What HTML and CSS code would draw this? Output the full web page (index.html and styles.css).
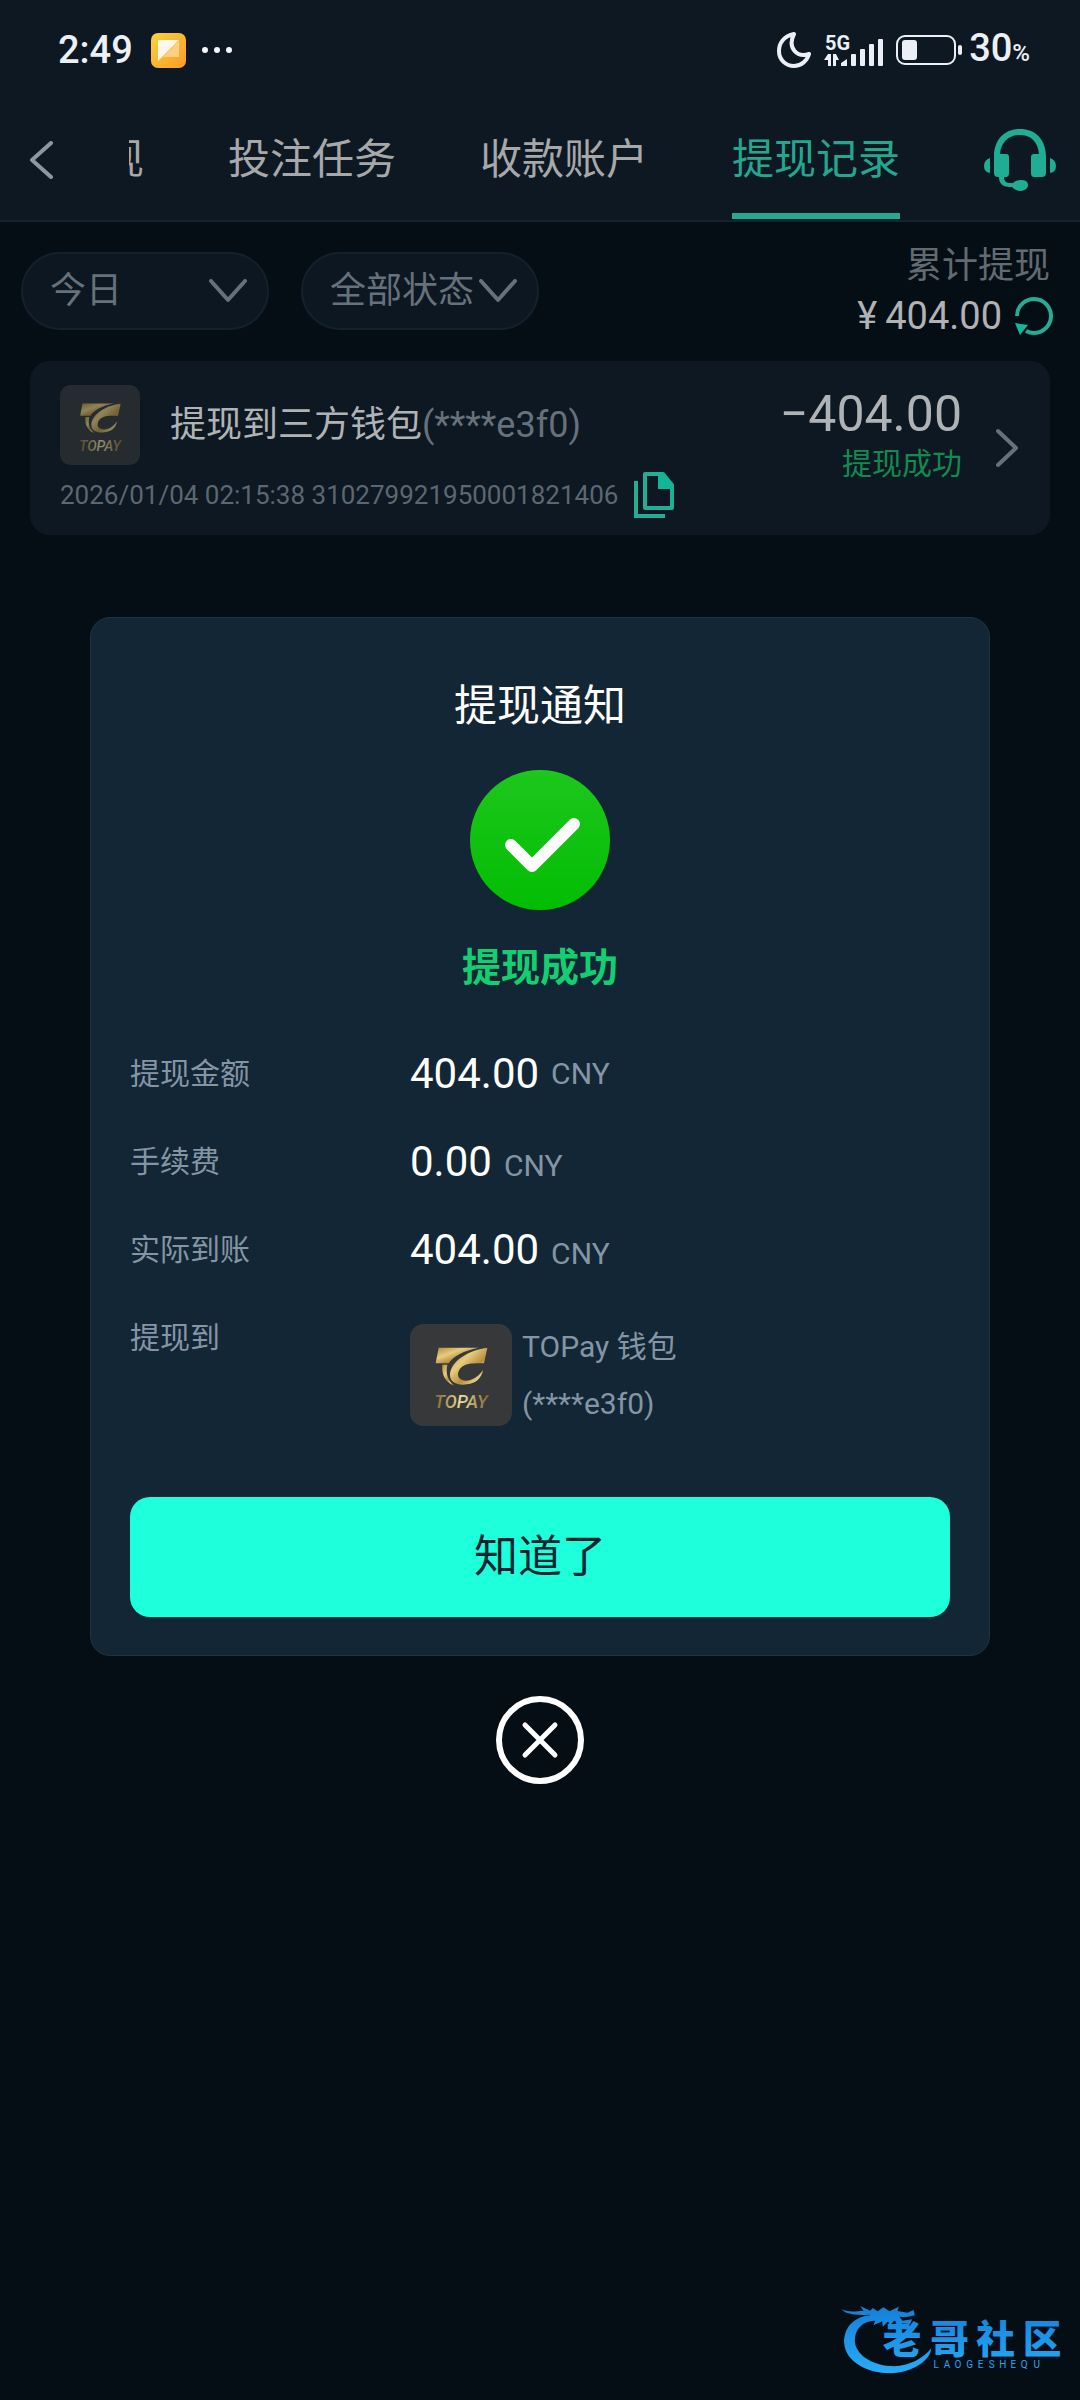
FILE: index.html
```html
<!DOCTYPE html>
<html lang="zh-CN">
<head>
<meta charset="utf-8">
<meta name="viewport" content="width=device-width, initial-scale=1">
<title>提现记录</title>
<link rel="stylesheet" href="styles.css">
</head>
<body>
<svg class="defs" aria-hidden="true">
  <defs>
    <linearGradient id="gold" x1="0" y1="0" x2="1" y2="1">
      <stop offset="0" stop-color="#b28a3c"/>
      <stop offset=".35" stop-color="#e6cd7c"/>
      <stop offset=".6" stop-color="#b98f40"/>
      <stop offset=".8" stop-color="#e6cf86"/>
      <stop offset="1" stop-color="#a37a30"/>
    </linearGradient>
    <linearGradient id="goldText" x1="0" x2="1">
      <stop offset="0" stop-color="#80632c"/>
      <stop offset=".5" stop-color="#f0dfa0"/>
      <stop offset="1" stop-color="#80632c"/>
    </linearGradient>
    <symbol id="topay" viewBox="30 42 306 306">
      <rect x="30" y="42" width="306" height="306" rx="40" fill="#37383a"/>
      <g fill="url(#gold)">
        <path d="M116 113H236C192 122 160 138 146 160H107Z"/>
        <path d="M127 164H142C136 190 144 212 162 226C138 218 124 195 127 164Z"/>
        <path d="M262 114C212 118 150 152 150 196C150 218 174 227 200 223C230 219 244 205 249 180C236 198 220 212 197 212C172 211 168 190 182 174C198 158 225 160 252 160Z"/>
      </g>
      <text x="183" y="293" text-anchor="middle" font-family="Roboto, sans-serif" font-size="54" font-weight="500" font-style="italic" fill="url(#goldText)">TOPAY</text>
    </symbol>
    <symbol id="down" viewBox="0 0 38 24">
      <path d="M2 2L19 21L36 2" fill="none" stroke="currentColor" stroke-width="4" stroke-linecap="round" stroke-linejoin="round"/>
    </symbol>
  </defs>
</svg>

<header class="top">
  <div class="status">
    <span class="clock">2:49</span>
    <svg class="app-badge" viewBox="0 0 35 35" aria-hidden="true">
      <defs><linearGradient id="amber" x1="0" y1="0" x2="1" y2="1"><stop offset="0" stop-color="#fbd33f"/><stop offset="1" stop-color="#fb9a26"/></linearGradient></defs>
      <rect width="35" height="35" rx="7" fill="url(#amber)"/>
      <path d="M28 8V24H12Z" fill="#ffd083"/>
      <path d="M8 7H28L7 28V8Q7 7 8 7Z" fill="#fff8ea"/>
    </svg>
    <svg class="more" viewBox="0 0 31 8" fill="#f3f6fa" aria-hidden="true"><circle cx="3" cy="4" r="3"/><circle cx="15" cy="4" r="3"/><circle cx="27" cy="4" r="3"/></svg>
    <span class="spacer"></span>
    <svg class="moon" viewBox="0 0 34 36" aria-hidden="true"><path d="M17 2C7 4 2 11 2 19C2 28 9 34 17 34C24 34 30 29 32 22C20 26 10 16 17 2Z" fill="none" stroke="#eceff6" stroke-width="4" stroke-linejoin="round"/></svg>
    <svg class="signal" viewBox="0 0 60 32" fill="#eceff6" aria-label="5G">
      <text x="2" y="16" font-family="Roboto, sans-serif" font-size="20" font-weight="700">5G</text>
      <path d="M5 20H8V32H5V26H1ZM10 20H13L16 26H13V32H10Z"/>
      <path d="M18 32V29L24 25V32Z"/>
      <rect x="28" y="20" width="5" height="12" rx="1"/><rect x="37" y="15" width="5" height="17" rx="1"/><rect x="46" y="10" width="5" height="22" rx="1"/><rect x="55" y="5" width="5" height="27" rx="1"/>
    </svg>
    <svg class="battery" viewBox="0 0 66 30" aria-hidden="true"><rect x="1" y="1" width="58" height="28" rx="8" fill="none" stroke="#eceff6" stroke-width="2"/><rect x="6" y="5" width="15" height="20" rx="3" fill="#eceff6"/><rect x="62" y="10" width="4" height="10" rx="2" fill="#eceff6"/></svg>
    <span class="charge">30<small>%</small></span>
  </div>
  <div class="bar">
    <button class="icon-button" aria-label="返回">
      <svg width="25" height="38" viewBox="0 0 25 38"><path d="M22 2L3 19L22 36" fill="none" stroke="#8b97a3" stroke-width="4" stroke-linecap="round" stroke-linejoin="round"/></svg>
    </button>
    <nav class="tabs">
      <a href="#">提现</a>
      <a href="#">投注任务</a>
      <a href="#">收款账户</a>
      <a href="#" class="active" aria-current="page">提现记录</a>
    </nav>
    <button class="icon-button" aria-label="客服">
      <svg width="72" height="62" viewBox="0 0 72 62" fill="#1fae94">
        <path d="M10 28C10 10 21 0 36 0S62 10 62 28V44Q62 48 58 48H50Q47 48 47 44V28Q47 25 50 25H55C54 13 47 6 36 6S17 13 16 25H22Q25 25 25 28V44Q25 48 22 48H20C20 52 22 54 27 54H29Q32 51 37 51Q44 51 44 56T37 62Q31 62 28 58H26C18 58 15 54 15 48H14Q10 48 10 44Z"/>
        <path d="M6 29V44Q0 43 0 37T6 29ZM66 29V44Q72 43 72 37T66 29Z"/>
      </svg>
    </button>
  </div>
</header>

<main class="page">
  <section class="toolbar">
    <div class="filter filter-date">
      <select aria-label="日期"><option>今日</option></select>
      <svg aria-hidden="true"><use href="#down"/></svg>
    </div>
    <div class="filter filter-state">
      <select aria-label="状态"><option>全部状态</option></select>
      <svg aria-hidden="true"><use href="#down"/></svg>
    </div>
    <div class="total">
      <span>累计提现</span>
      <div class="total-value">
        <span class="currency">¥</span><strong>404.00</strong>
        <button class="icon-button" aria-label="刷新">
          <svg width="40" height="40" viewBox="0 0 40 40"><path d="M3 20A17 17 0 1 1 12 35" fill="none" stroke="#26ab94" stroke-width="4"/><path d="M1 27L14 29L6 39Z" fill="#14b898"/></svg>
        </button>
      </div>
    </div>
  </section>

  <article class="record">
    <div class="record-info">
      <div class="record-title">
        <svg class="record-logo" role="img" aria-label="TOPAY"><use href="#topay"/></svg>
        <h2>提现到三方钱包<span>(****e3f0)</span></h2>
      </div>
      <div class="record-meta">
        <span>2026/01/04 02:15:38 310279921950001821406</span>
        <button class="icon-button" aria-label="复制">
          <svg width="40" height="48" viewBox="0 0 40 48"><path d="M2 10V45H31" fill="none" stroke="#22ad94" stroke-width="4"/><path d="M11 3H29L38 14V37H11Z" fill="none" stroke="#22ad94" stroke-width="4" stroke-linejoin="round"/><path d="M24 2H29L39 14V18H24Z" fill="#12b696"/></svg>
        </button>
      </div>
    </div>
    <div class="record-result">
      <strong>−404.00</strong>
      <span>提现成功</span>
    </div>
    <svg class="record-arrow" viewBox="0 0 25 40" aria-hidden="true"><path d="M3 3L21 20L3 37" fill="none" stroke="#66717b" stroke-width="4" stroke-linecap="round" stroke-linejoin="round"/></svg>
  </article>
</main>

<div class="overlay">
  <section class="modal" role="dialog" aria-modal="true" aria-labelledby="notice">
    <h1 id="notice">提现通知</h1>
    <svg class="check" viewBox="0 0 140 140" aria-hidden="true">
      <defs><linearGradient id="ok" x1="0" y1="0" x2="0" y2="1"><stop offset="0" stop-color="#1dc71d"/><stop offset="1" stop-color="#02bd02"/></linearGradient></defs>
      <circle cx="70" cy="70" r="70" fill="url(#ok)"/>
      <path d="M41 75L62 96L104 54" fill="none" stroke="#fff" stroke-width="12" stroke-linecap="round" stroke-linejoin="round"/>
    </svg>
    <p class="result">提现成功</p>
    <dl class="details">
      <dt>提现金额</dt><dd class="centered"><strong>404.00</strong><span>CNY</span></dd>
      <dt>手续费</dt><dd><strong>0.00</strong><span>CNY</span></dd>
      <dt>实际到账</dt><dd><strong>404.00</strong><span>CNY</span></dd>
      <dt>提现到</dt>
      <dd class="account">
        <svg class="account-logo" role="img" aria-label="TOPAY"><use href="#topay"/></svg>
        <div>TOPay 钱包<br>(****e3f0)</div>
      </dd>
    </dl>
    <button class="confirm">知道了</button>
  </section>
  <button class="icon-button" aria-label="关闭">
    <svg width="88" height="88" viewBox="0 0 88 88" fill="none" stroke="#fff" stroke-width="6" stroke-linecap="round"><circle cx="44" cy="44" r="41"/><path d="M29 29L59 59M59 29L29 59" stroke-width="5"/></svg>
  </button>
</div>

<svg class="watermark" viewBox="60 60 680 225" role="img" aria-label="老哥社区">
  <defs><linearGradient id="sky" gradientUnits="userSpaceOnUse" x1="0" y1="80" x2="0" y2="280"><stop offset="0" stop-color="#147fd8"/><stop offset="1" stop-color="#28acf8"/></linearGradient></defs>
  <g fill="url(#sky)">
    <path d="M160 104C95 108 70 148 72 190C76 245 140 280 210 280C280 278 332 240 333 205C308 238 260 262 210 258C150 254 105 220 104 182C104 145 130 118 180 122Z"/>
    <path d="M64 88C80 96 100 95 130 92L120 78L150 92L158 84L172 94L190 82L208 94L236 80L232 93L262 98L280 90L284 106L256 112L238 110L246 122L276 118L270 132L240 130L222 122L208 138L204 124L188 140L186 124L160 136L166 120L140 122L150 104C110 106 78 104 64 88Z"/>
    <text y="220" x="188 330 468 608" font-family="'Noto Sans CJK SC', sans-serif" font-size="116" font-weight="900">老哥社区</text>
    <text y="263" x="340 371 403 438 473 506 537 571 602 640" font-family="Roboto, sans-serif" font-size="30">LAOGESHEQU</text>
  </g>
</svg>
</body>
</html>
```
FILE: styles.css
```css
* { box-sizing: border-box; }

body {
  position: relative;
  min-height: 100vh;
  margin: 0;
  background: #060e15;
  color: #a9abad;
  font-family: Roboto, "Noto Sans CJK SC", sans-serif;
  font-size: 36px;
  line-height: 50px;
}

h1, h2, p, dl, dd { margin: 0; }
h1, h2, strong { font-weight: 400; }
svg { display: block; flex: none; }
.defs { position: absolute; width: 0; height: 0; }

button, select {
  border: 0;
  background: none;
  color: inherit;
  font: inherit;
}

.icon-button { padding: 0; flex: none; }

/* Header */
.top {
  background: #0d1822;
  border-bottom: 2px solid #162430;
}

.status {
  display: flex;
  align-items: center;
  height: 100px;
  padding: 0 50px 0 58px;
  color: #eceff6;
  font-size: 38px;
  font-weight: 500;
}

.spacer { flex: 1; }
.app-badge { width: 35px; margin: 0 16px 0 18px; }
.more { width: 31px; }
.moon { width: 34px; margin-right: 12px; }
.signal { width: 60px; margin-right: 13px; overflow: visible; }
.battery { width: 66px; margin-right: 7px; }
.charge small { font-size: 24px; }

.bar {
  display: flex;
  align-items: center;
  height: 120px;
  padding: 0 24px 0 29px;
}

.tabs {
  display: flex;
  flex: 1;
  justify-content: flex-end;
  gap: 84px;
  margin-left: 75px;
  padding-right: 84px;
  overflow: hidden;
  font-size: 42px;
  line-height: 118px;
}

.tabs a {
  position: relative;
  flex: none;
  color: #a6a8aa;
  text-decoration: none;
}

.tabs .active { color: #23a78f; }

.tabs .active::after {
  content: "";
  position: absolute;
  inset: auto 0 0;
  height: 6px;
  background: #25a991;
}

/* Filters and total */
.page { padding: 19px 30px 0; }

.toolbar {
  display: flex;
  align-items: center;
  gap: 32px;
  margin: 0 -4px 20px -9px;
}

.filter {
  display: grid;
  align-items: center;
  color: #66717b;
}

.filter select {
  grid-area: 1 / 1;
  width: 100%;
  height: 78px;
  padding: 0 27px;
  border: 2px solid #13212c;
  border-radius: 39px;
  background: #0c1722;
  appearance: none;
}

.filter svg {
  grid-area: 1 / 1;
  justify-self: end;
  width: 38px;
  height: 24px;
  margin-right: 22px;
  pointer-events: none;
}

.filter-date { width: 248px; }
.filter-state { width: 238px; }

.total {
  margin-left: auto;
  color: #626a72;
  text-align: right;
}

.total > span { margin-right: 4px; }

.total-value {
  display: flex;
  align-items: center;
  justify-content: flex-end;
  color: #b0b2b4;
  font-size: 38px;
}

.currency { margin-right: 8px; }
.total-value .icon-button { margin-left: 12px; }

/* Record card */
.record {
  display: flex;
  padding: 24px 30px 10px;
  border-radius: 20px;
  background: #0d1822;
}

.record-info { flex: 1; }

.record-title {
  display: flex;
  align-items: center;
  gap: 30px;
}

.record-logo {
  width: 80px;
  height: 80px;
  opacity: .6;
}

.record h2 { font-size: 36px; color: #b0b3b6; }
.record h2 span { color: #66717b; }

.record-meta {
  display: flex;
  align-items: center;
  gap: 16px;
  height: 60px;
  color: #5c6771;
  font-size: 26px;
}

.record-result {
  display: flex;
  flex-direction: column;
  align-items: flex-end;
  padding-top: 4px;
}

.record-result strong { color: #b0b3b6; font-size: 50px; }
.record-result span { color: #128a50; font-size: 30px; }

.record-arrow {
  align-self: center;
  width: 25px;
  margin: 0 0 14px 33px;
}

/* Notice */
.overlay {
  position: absolute;
  inset: 0;
  display: flex;
  flex-direction: column;
  align-items: center;
  justify-content: center;
  gap: 40px;
  padding: 0 90px;
}

.modal {
  display: flex;
  flex-direction: column;
  align-items: center;
  width: 100%;
  padding: 58px 39px 38px;
  border: 1px solid #1e3444;
  border-radius: 20px;
  background: #132635;
}

.modal h1 {
  color: #fff;
  font-size: 43px;
  line-height: 60px;
}

.check { width: 140px; margin: 34px 0 28px; }

.result {
  color: #14cf72;
  font-size: 39px;
  font-weight: 700;
  line-height: 60px;
}

.details {
  display: grid;
  grid-template-columns: 280px 1fr;
  grid-template-rows: repeat(3, 88px) auto;
  align-self: stretch;
  margin: 32px 0 65px;
  color: #8495a5;
  font-size: 30px;
  line-height: 88px;
}

.details dd {
  display: flex;
  align-items: baseline;
  gap: 12px;
}

.details .centered { align-items: center; }
.details strong { color: #fff; font-size: 42px; }

.details .account {
  align-items: center;
  gap: 10px;
  padding-top: 24px;
  line-height: 57px;
}

.account-logo { width: 102px; height: 102px; }

.confirm {
  align-self: stretch;
  height: 120px;
  border-radius: 20px;
  background: #1effdb;
  color: #0b2430;
  font-size: 44px;
}

.watermark {
  position: absolute;
  right: 13px;
  bottom: 25px;
  width: 227px;
  height: 75px;
}
```
